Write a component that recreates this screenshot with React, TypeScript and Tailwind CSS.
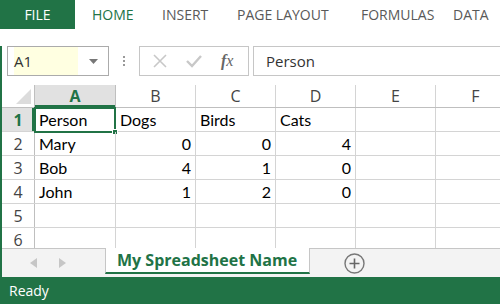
const GREEN = "#217346";

const cols = ["A", "B", "C", "D", "E", "F"];
const rows: (string | number)[][] = [
  ["Person", "Dogs", "Birds", "Cats", "", ""],
  ["Mary", 0, 0, 4, "", ""],
  ["Bob", 4, 1, 0, "", ""],
  ["John", 1, 2, 0, "", ""],
  ["", "", "", "", "", ""],
  ["", "", "", "", "", ""],
];
const colW = ["w-[81px]", "w-[80px]", "w-[80px]", "w-[80px]", "w-[80px]", "w-[80px]"];

function Tabs() {
  return (
    <div className="flex h-[29px] items-center pb-px text-[14px] text-[#595959]" style={{ fontFamily: "'Open Sans', sans-serif" }}>
      <div className="flex h-[29px] w-[75px] items-center justify-center bg-[#217346] text-white">FILE</div>
      <div className="ml-[17px] w-[70px] text-[#217346]">HOME</div>
      <div className="w-[75px]">INSERT</div>
      <div className="w-[124px]">PAGE LAYOUT</div>
      <div className="w-[92px]">FORMULAS</div>
      <div className="whitespace-nowrap">DATA</div>
    </div>
  );
}

function FormulaBar() {
  return (
    <div className="mt-[17px] flex h-[30px] items-stretch" style={{ fontFamily: "'Open Sans', sans-serif" }}>
      <div className="ml-[5px] flex w-[102px] items-center border border-[#ababab]">
        <div className="ml-[6px] flex h-full w-[64px] items-center bg-[#ffffe1] text-[15px] text-[#333]">A1</div>
        <svg width="9" height="5" viewBox="0 0 9 5" className="ml-[11px]">
          <path d="M0 0h9L4.5 5z" fill="#777" />
        </svg>
      </div>
      <div className="flex w-[30px] flex-col items-center justify-center gap-[2px]">
        <span className="h-[2px] w-[2px] bg-[#999]" />
        <span className="h-[2px] w-[2px] bg-[#999]" />
        <span className="h-[2px] w-[2px] bg-[#999]" />
      </div>
      <div className="flex w-[110px] items-center border border-[#c6c6c6]">
        <svg width="14" height="14" viewBox="0 0 14 14" className="ml-[13px]">
          <path d="M1 1l12 12M13 1L1 13" stroke="#c8c8c8" strokeWidth="1.6" />
        </svg>
        <svg width="16" height="14" viewBox="0 0 16 14" className="ml-[19px]">
          <path d="M1 7l5 5L15 2" stroke="#c8c8c8" strokeWidth="2.4" fill="none" />
        </svg>
        <span className="ml-[19px] text-[16px] italic text-[#666]" style={{ fontFamily: "'Liberation Serif', serif" }}>
          <b>f</b>x
        </span>
      </div>
      <div className="ml-[4px] flex flex-1 items-center border border-r-0 border-[#c6c6c6] pl-[12px] text-[15px] text-[#333]">
        Person
      </div>
    </div>
  );
}

function Grid() {
  return (
    <div className="mt-[9px] h-[163px] overflow-hidden">
      <div className="flex h-[23px] border-b border-[#bfbfbf]" style={{ fontFamily: "'Open Sans', sans-serif" }}>
        <div className="relative w-[33px] shrink-0 border-r border-[#bfbfbf]">
          <div className="absolute bottom-[3px] right-[3px] h-0 w-0 border-b-[15px] border-l-[15px] border-b-[#dcdcdc] border-l-transparent" />
        </div>
        {cols.map((c, i) => (
          <div
            key={c}
            className={`${colW[i]} flex shrink-0 items-center justify-center border-r text-[16px] ${
              i === 0
                ? "border-[#bfbfbf] bg-[#e1e1e1] font-bold text-[#217346] shadow-[inset_0_-2px_0_#217346]"
                : "border-[#d4d4d4] text-[#444]"
            }`}
          >
            {c}
          </div>
        ))}
      </div>
      {rows.map((r, ri) => (
        <div key={ri} className="flex h-[24px] border-b border-[#d4d4d4]">
          <div
            className={`flex w-[33px] shrink-0 items-center justify-center border-r border-[#bfbfbf] text-[16px] ${
              ri === 0 ? "bg-[#e1e1e1] font-bold text-[#217346] shadow-[inset_-2px_0_0_#217346]" : "text-[#444]"
            }`}
            style={{ fontFamily: "'Open Sans', sans-serif" }}
          >
            {ri + 1}
          </div>
          {r.map((v, ci) => (
            <div
              key={ci}
              className={`${colW[ci]} relative flex shrink-0 items-center border-r border-[#d4d4d4] px-[4px] text-[16px] text-black ${
                typeof v === "number" ? "justify-end" : ""
              }`}
              style={{ fontFamily: "Lato, sans-serif" }}
            >
              {v}
              {ri === 0 && ci === 0 && (
                <div className="absolute -left-px -top-px h-[26px] w-[82px] border-2 border-[#217346]">
                  <div className="absolute -bottom-[4px] -right-[4px] h-[6px] w-[6px] border border-white bg-[#217346]" />
                </div>
              )}
            </div>
          ))}
        </div>
      ))}
    </div>
  );
}

function SheetTabs() {
  return (
    <div className="flex h-[29px] border-t border-[#c6c6c6] bg-[#f3f3f3]">
      <div className="flex w-[103px] items-center">
        <svg width="7" height="10" viewBox="0 0 7 10" className="ml-[28px]">
          <path d="M7 0v10L0 5z" fill="#c6c6c6" />
        </svg>
        <svg width="7" height="10" viewBox="0 0 7 10" className="ml-[22px]">
          <path d="M0 0v10l7-5z" fill="#c6c6c6" />
        </svg>
      </div>
      <div
        className="-mt-px flex h-[26px] w-[205px] items-center border-x border-b-2 border-x-[#c6c6c6] border-b-[#217346] bg-white pl-[11px] text-[16px] font-bold text-[#217346]"
        style={{ fontFamily: "'Open Sans', sans-serif" }}
      >
        My Spreadsheet Name
      </div>
      <div className="flex items-center pl-[34px]">
        <svg width="21" height="21" viewBox="0 0 21 21">
          <circle cx="10.5" cy="10.5" r="9.5" stroke="#777" strokeWidth="1.4" fill="none" />
          <path d="M10.5 5.5v10M5.5 10.5h10" stroke="#666" strokeWidth="1.6" />
        </svg>
      </div>
    </div>
  );
}

export default function App() {
  return (
    <div className="h-[306px] w-[500px] overflow-hidden bg-white">
      <Tabs />
      <div className="border-l-2 border-[#217346]">
        <FormulaBar />
        <Grid />
        <SheetTabs />
      </div>
      <div
        className="flex h-[27px] items-center bg-[#217346] pl-[9px] text-[14px] text-white"
        style={{ fontFamily: "'Open Sans', sans-serif", backgroundColor: GREEN }}
      >
        Ready
      </div>
    </div>
  );
}
